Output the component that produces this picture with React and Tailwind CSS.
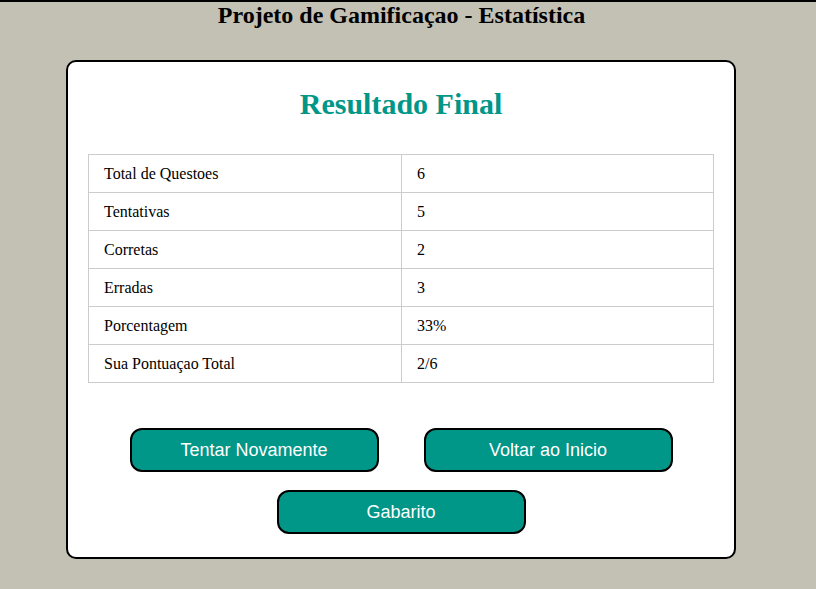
import React from "react";

const LINHAS = [
  ["Total de Questoes", "6"],
  ["Tentativas", "5"],
  ["Corretas", "2"],
  ["Erradas", "3"],
  ["Porcentagem", "33%"],
  ["Sua Pontuaçao Total", "2/6"],
];

function Botao({ children }) {
  return (
    <button className="w-[249px] h-[44px] rounded-[12px] border-2 border-black bg-[#009688] text-white text-[18px] font-['Liberation_Sans',Arial,sans-serif]">
      {children}
    </button>
  );
}

export default function App() {
  return (
    <div className="min-h-[589px] w-[816px] bg-[#c3c0b4] border-t-2 border-black font-['Liberation_Serif','Times_New_Roman',serif]">
      <div className="w-[803px]">
        <h1 className="text-center text-[24px] font-bold leading-[26px] text-black">
          Projeto de Gamificaçao - Estatística
        </h1>

        {/* Cartão de resultado */}
        <div className="ml-[66px] mt-[32px] w-[670px] rounded-[10px] border-2 border-black bg-white px-[20px] pt-[25px] pb-[23px]">
          <h2 className="text-center text-[30px] font-bold leading-[34px] text-[#009688]">
            Resultado Final
          </h2>

          <table className="mt-[33px] w-[626px] border-collapse text-[16px] text-black">
            <tbody>
              {LINHAS.map(([rotulo, valor]) => (
                <tr key={rotulo} className="h-[38px]">
                  <td className="w-[313px] border border-[#cccccc] px-[15px] pt-[1px]">{rotulo}</td>
                  <td className="border border-[#cccccc] px-[15px] pt-[1px]">{valor}</td>
                </tr>
              ))}
            </tbody>
          </table>

          <div className="mt-[45px] flex flex-col items-center gap-[18px]">
            <div className="flex gap-[45px]">
              <Botao>Tentar Novamente</Botao>
              <Botao>Voltar ao Inicio</Botao>
            </div>
            <Botao>Gabarito</Botao>
          </div>
        </div>
      </div>
    </div>
  );
}
